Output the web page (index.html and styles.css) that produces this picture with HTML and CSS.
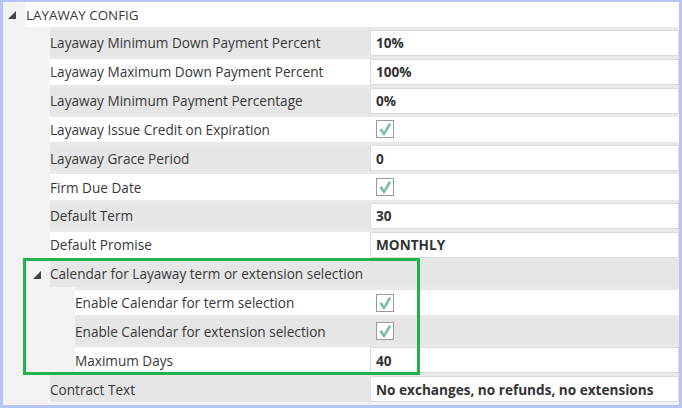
FILE: index.html
```html
<!DOCTYPE html>
<html>
<head>
<meta charset="utf-8">
<link rel="stylesheet" href="styles.css">
</head>
<body>
<div class="panel">
  <div class="group-head">
    <svg class="tri tri-head" width="8" height="8" viewBox="0 0 8 8"><polygon points="8,0 8,8 0,8"/></svg>
    <div class="head-label">LAYAWAY CONFIG</div>
  </div>
  <div class="rows">
    <div class="row alt"><div class="label">Layaway Minimum Down Payment Percent</div><div class="value"><div class="box">10%</div></div></div>
    <div class="row"><div class="label">Layaway Maximum Down Payment Percent</div><div class="value"><div class="box">100%</div></div></div>
    <div class="row alt"><div class="label">Layaway Minimum Payment Percentage</div><div class="value"><div class="box">0%</div></div></div>
    <div class="row"><div class="label">Layaway Issue Credit on Expiration</div><div class="value check-cell"><span class="cb"><svg width="16" height="16" viewBox="0 0 16 16"><path d="M2.2 8.4 L4.9 7.2 L7 10.6 L11.8 2 L14.4 3.2 L7.6 14.4 L6.4 14.4 Z"/></svg></span></div></div>
    <div class="row alt"><div class="label">Layaway Grace Period</div><div class="value"><div class="box">0</div></div></div>
    <div class="row"><div class="label">Firm Due Date</div><div class="value check-cell"><span class="cb"><svg width="16" height="16" viewBox="0 0 16 16"><path d="M2.2 8.4 L4.9 7.2 L7 10.6 L11.8 2 L14.4 3.2 L7.6 14.4 L6.4 14.4 Z"/></svg></span></div></div>
    <div class="row alt"><div class="label">Default Term</div><div class="value"><div class="box">30</div></div></div>
    <div class="row"><div class="label">Default Promise</div><div class="value"><div class="box">MONTHLY</div></div></div>
    <div class="row sub-head">
      <svg class="tri tri-sub" width="8" height="8" viewBox="0 0 8 8"><polygon points="8,0 8,8 0,8"/></svg>
      <div class="sub-title">Calendar for Layaway term or extension selection</div>
    </div>
    <div class="row sub"><div class="label">Enable Calendar for term selection</div><div class="value check-cell"><span class="cb"><svg width="16" height="16" viewBox="0 0 16 16"><path d="M2.2 8.4 L4.9 7.2 L7 10.6 L11.8 2 L14.4 3.2 L7.6 14.4 L6.4 14.4 Z"/></svg></span></div></div>
    <div class="row sub alt"><div class="label">Enable Calendar for extension selection</div><div class="value check-cell"><span class="cb"><svg width="16" height="16" viewBox="0 0 16 16"><path d="M2.2 8.4 L4.9 7.2 L7 10.6 L11.8 2 L14.4 3.2 L7.6 14.4 L6.4 14.4 Z"/></svg></span></div></div>
    <div class="row sub"><div class="label">Maximum Days</div><div class="value"><div class="box">40</div></div></div>
    <div class="row alt"><div class="label">Contract Text</div><div class="value"><div class="box">No exchanges, no refunds, no extensions</div></div></div>
  </div>
  <div class="highlight"></div>
</div>
</body>
</html>
```
FILE: styles.css
```css
* { box-sizing: border-box; }
html, body { margin: 0; padding: 0; }
body {
  width: 682px;
  height: 408px;
  overflow: hidden;
  font-family: "Open Sans", "Noto Sans", sans-serif;
  font-size: 13.6px;
  color: #383838;
}
.panel {
  position: relative;
  width: 682px;
  height: 408px;
  background: #f3f3f3;
  border-style: solid;
  border-color: #b7c5f6;
  border-width: 2px 3px 3px 3px;
  overflow: hidden;
}
.group-head {
  display: flex;
  align-items: center;
  height: 25px;
}
.tri { fill: #444; flex: none; }
.tri-head { margin-left: 5px; margin-right: 9px; margin-top: 1px; }
.head-label {
  flex: 1;
  height: 100%;
  display: flex;
  align-items: center;
  background: #fff;
  padding-left: 1px;
  font-size: 13.4px;
}
.rows { display: flex; flex-direction: column; }
.row {
  display: flex;
  height: 28.85px;
  margin-left: 47px;
  padding-top: 3px;
  background: #e9e9e9;
}
.row.sub { margin-left: 72px; }
.label {
  width: 320px;
  flex: none;
  height: 100%;
  display: flex;
  align-items: center;
  padding-left: 0;
  background: #fff;
  white-space: nowrap;
}
.row.sub .label { width: 295px; }
.row.alt .label { background: #e6e6e6; }
.value {
  flex: 1;
  height: 100%;
  display: flex;
}
.box {
  flex: 1;
  display: flex;
  align-items: center;
  background: #fff;
  border: 1px solid #dcdcdc;
  padding-left: 5px;
  font-weight: 700;
  color: #333;
  white-space: nowrap;
}
.check-cell { background: #fff; padding-left: 6px; align-items: center; }
.row.alt .check-cell { background: #e6e6e6; }
.cb {
  width: 18px;
  height: 18px;
  border: 1px solid #9a9a9a;
  background: #fff;
  display: flex;
  align-items: center;
  justify-content: center;
}
.cb svg { fill: #7fc0a8; }
.row.sub-head {
  margin-left: 0;
  padding-left: 0;
  background: linear-gradient(#e9e9e9, #e9e9e9) no-repeat 47px 0 / 100% 3px, #f3f3f3;
  align-items: stretch;
}
.tri-sub { margin-left: 30px; margin-right: 9px; align-self: center; margin-top: 2px; }
.sub-title {
  flex: 1;
  display: flex;
  align-items: center;
  background: #e6e6e6;
  padding-left: 0;
  white-space: nowrap;
}
.highlight {
  position: absolute;
  left: 20px;
  top: 256px;
  width: 397px;
  height: 117px;
  border: 3px solid #22b14c;
  pointer-events: none;
}
```
